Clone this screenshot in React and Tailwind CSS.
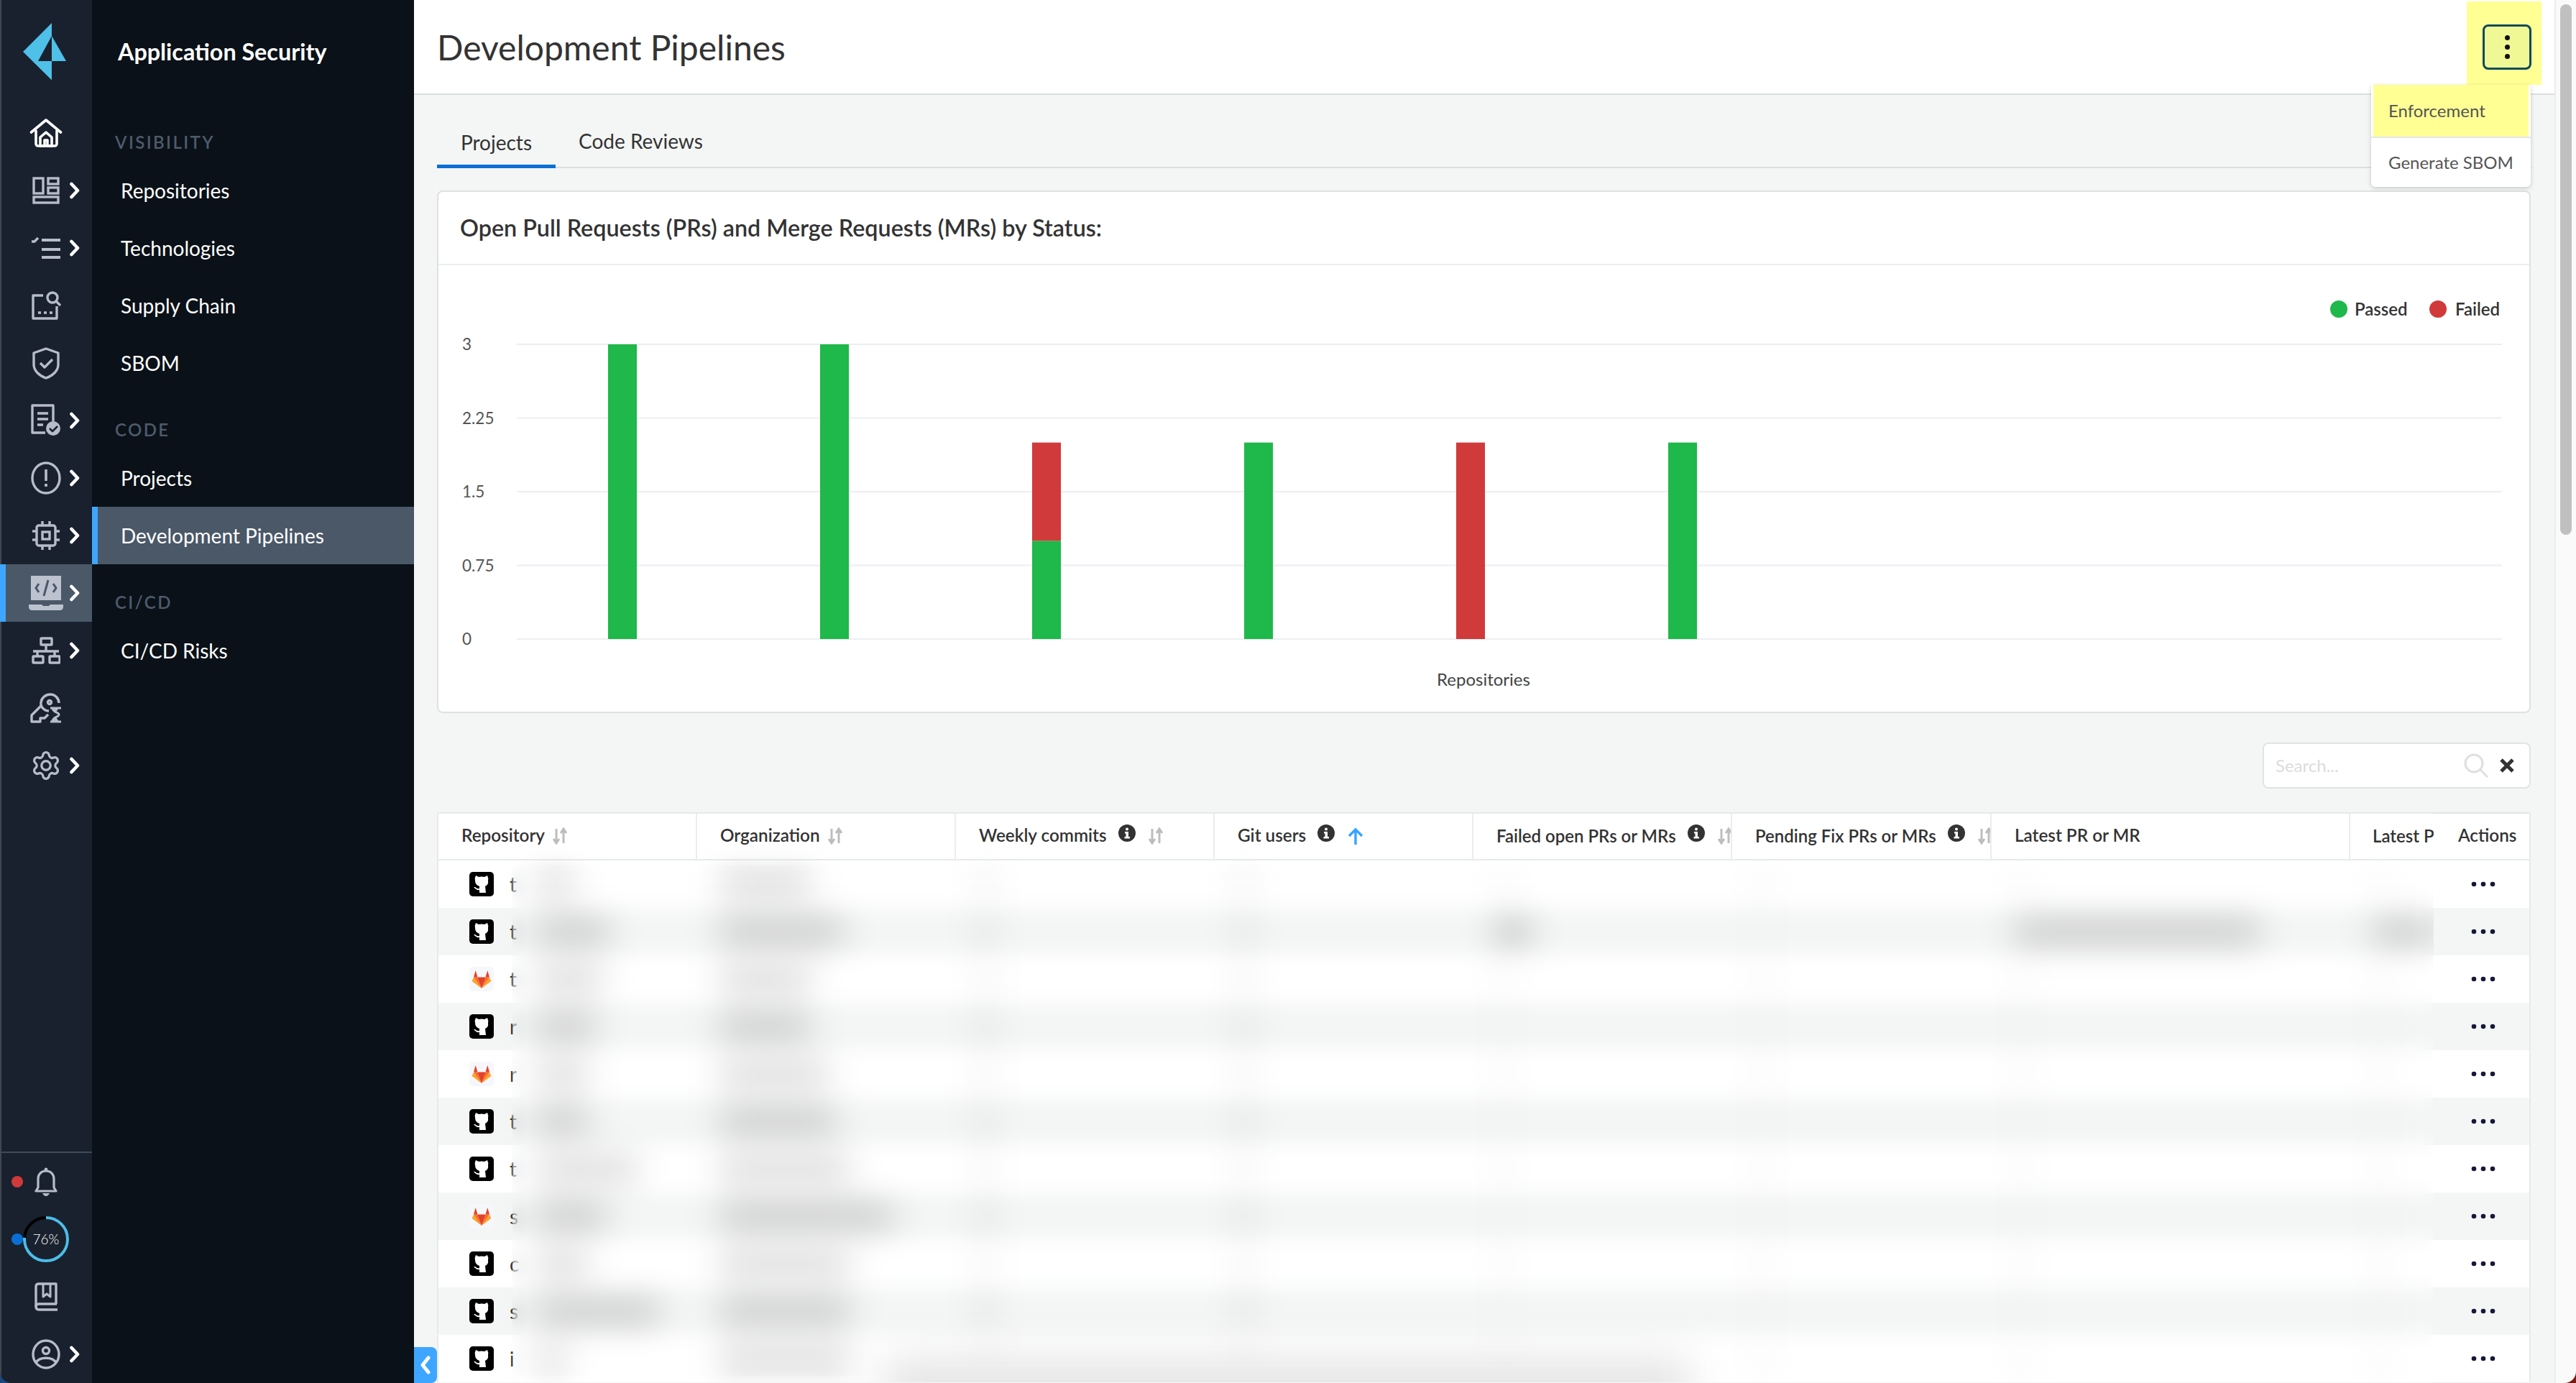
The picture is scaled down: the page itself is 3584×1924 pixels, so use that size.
import React from 'react';

const ICON = '#b6bcc8';

function Chevron() {
  return (
    <svg width="14" height="24" viewBox="0 0 14 24" fill="none" stroke="#fff" strokeWidth="4.6" strokeLinecap="round" strokeLinejoin="round">
      <path d="M2.5 3 L11 12 L2.5 21" />
    </svg>
  );
}

// rail icons, all drawn at their real pixel size
function HomeIcon() {
  return (
    <svg width="46" height="42" viewBox="0 0 46 42" fill="none" stroke="#fff" strokeWidth="3.6" strokeLinejoin="round" strokeLinecap="round">
      <path d="M2.5 20 L23 3 L43.5 20" />
      <path d="M9 18 V36 a3 3 0 0 0 3 3 H35 a3 3 0 0 0 3-3 V18" />
      <path d="M15 27 L23 20 L31 27 V39 H25 V31 H21 V39 H15 Z" />
    </svg>
  );
}
function DashIcon() {
  return (
    <svg width="38" height="38" viewBox="0 0 38 38" fill="none" stroke={ICON} strokeWidth="3.4">
      <rect x="2" y="2" width="13" height="21" />
      <rect x="22" y="2" width="14" height="8" />
      <rect x="22" y="15" width="14" height="8" />
      <rect x="2" y="28" width="34" height="8" />
    </svg>
  );
}
function ListIcon() {
  return (
    <svg width="42" height="32" viewBox="0 0 42 32" fill="none" stroke={ICON} strokeWidth="4">
      <path d="M1 7 L5 7 L10 2" strokeWidth="3.4" />
      <path d="M15 5 H41 M15 18 H41 M15 29 H41" />
    </svg>
  );
}
function SearchDocIcon() {
  return (
    <svg width="42" height="42" viewBox="0 0 42 42" fill="none" stroke={ICON} strokeWidth="3.4" strokeLinejoin="round">
      <path d="M17 7 H3 V39 H36 V22" />
      <circle cx="30" cy="10" r="7" />
      <path d="M35 15 L41 21" />
      <path d="M10 31 h4 M18 31 h4 M26 31 h4" strokeWidth="3.6" />
    </svg>
  );
}
function ShieldIcon() {
  return (
    <svg width="38" height="45" viewBox="0 0 38 45" fill="none" stroke={ICON} strokeWidth="3.4" strokeLinejoin="round">
      <path d="M19 2 L36 8 V24 C36 33 28 40 19 43 C10 40 2 33 2 24 V8 Z" />
      <path d="M11 22 L17 28 L28 17" />
    </svg>
  );
}
function DocCheckIcon() {
  return (
    <svg width="42" height="46" viewBox="0 0 42 46" fill="none" stroke={ICON} strokeWidth="3.4" strokeLinejoin="round">
      <path d="M31 24 V2 H2 V40 H20" />
      <path d="M9 13 H24 M9 21 H24 M9 29 H17" />
      <circle cx="31" cy="34" r="10" fill={ICON} stroke="none" />
      <path d="M26 34 L30 38 L37 31" stroke="#19212e" strokeWidth="2.6" />
    </svg>
  );
}
function AlertIcon() {
  return (
    <svg width="42" height="46" viewBox="0 0 42 46" fill="none" stroke={ICON} strokeWidth="3.4">
      <ellipse cx="21" cy="23" rx="19" ry="21" />
      <path d="M21 11 V27" strokeWidth="3.6" />
      <circle cx="21" cy="33" r="2.2" fill={ICON} stroke="none" />
    </svg>
  );
}
function CpuIcon() {
  return (
    <svg width="38" height="40" viewBox="0 0 38 40" fill="none" stroke={ICON} strokeWidth="3.4">
      <rect x="6" y="6" width="26" height="28" rx="3" />
      <rect x="14" y="15" width="10" height="10" />
      <path d="M14 0 V6 M24 0 V6 M14 34 V40 M24 34 V40 M0 14 H6 M0 26 H6 M32 14 H38 M32 26 H38" />
    </svg>
  );
}
function LaptopCodeIcon() {
  return (
    <svg width="48" height="48" viewBox="0 0 48 48" fill="none">
      <rect x="3" y="0" width="42" height="34" fill="#bcc3cf" />
      <path d="M14 11 L10 17 L14 23 M34 11 L38 17 L34 23 M27 6 L21 28" stroke="#4a5868" strokeWidth="3" />
      <path d="M0 40 H18 L20 42 H28 L30 40 H48 V43 Q48 48 43 48 H5 Q0 48 0 43 Z" fill="#bcc3cf" />
    </svg>
  );
}
function NetworkIcon() {
  return (
    <svg width="40" height="38" viewBox="0 0 40 38" fill="none" stroke={ICON} strokeWidth="3.4" strokeLinejoin="round">
      <rect x="13" y="2" width="15" height="9" rx="1" />
      <rect x="2" y="27" width="14" height="9" rx="1" />
      <rect x="25" y="27" width="14" height="9" rx="1" />
      <path d="M20 11 V20 M2 20 H38 M8 20 V27 M32 20 V27" />
    </svg>
  );
}
function KeyIcon() {
  return (
    <svg width="44" height="42" viewBox="0 0 44 42" fill="none" stroke={ICON} strokeWidth="3.4" strokeLinejoin="round">
      <path d="M26 25 C20 25 14 20 15 13 C16 6 22 2 28 2 C35 2 40 8 40 14" />
      <path d="M15 18 L2 31 V40 H14 V35 H20 L25 30" />
      <circle cx="27" cy="13" r="2.5" />
      <path d="M28 21 H43 M28 40 H43 M31 21 C31 27 40 27 40 30 C40 34 31 33 31 40" strokeWidth="3" />
      <path d="M31 21 H40 L35.5 27 Z M31 40 H40 L35.5 33 Z" fill={ICON} stroke="none" />
    </svg>
  );
}
function GearIcon() {
  return (
    <svg width="44" height="46" viewBox="0 0 24 24" fill="none" stroke={ICON} strokeWidth="1.8" strokeLinejoin="round">
      <path d="M9.671 4.136a2.34 2.34 0 0 1 4.659 0 2.34 2.34 0 0 0 3.319 1.915 2.34 2.34 0 0 1 2.33 4.033 2.34 2.34 0 0 0 0 3.831 2.34 2.34 0 0 1-2.33 4.033 2.34 2.34 0 0 0-3.319 1.915 2.34 2.34 0 0 1-4.659 0 2.34 2.34 0 0 0-3.32-1.915 2.34 2.34 0 0 1-2.33-4.033 2.34 2.34 0 0 0 0-3.831A2.34 2.34 0 0 1 6.35 6.051a2.34 2.34 0 0 0 3.319-1.915" />
      <circle cx="12" cy="12" r="3.4" />
    </svg>
  );
}
function BellIcon() {
  return (
    <svg width="32" height="40" viewBox="0 0 32 40" fill="none" stroke={ICON} strokeWidth="3.2" strokeLinejoin="round">
      <path d="M2 33 H30 L27 28 V16 C27 9 22 5 16 5 C10 5 5 9 5 16 V28 Z" />
      <circle cx="16" cy="3" r="2.4" fill={ICON} stroke="none" />
      <path d="M11 36 H21 Q19 40 16 40 Q13 40 11 36 Z" fill={ICON} stroke="none" />
    </svg>
  );
}
function BookIcon() {
  return (
    <svg width="32" height="40" viewBox="0 0 32 40" fill="none" stroke={ICON} strokeWidth="3.4" strokeLinejoin="round">
      <path d="M31 30 H6 Q2 30 2 34 Q2 38 6 38 H32" />
      <path d="M2 34 V6 Q2 2 6 2 H30 V30" />
      <path d="M12 2 V20 L17 16 L22 20 V2" strokeWidth="3" />
    </svg>
  );
}
function UserIcon() {
  return (
    <svg width="40" height="42" viewBox="0 0 40 42" fill="none" stroke={ICON} strokeWidth="3.4">
      <ellipse cx="20" cy="21" rx="18" ry="19" />
      <circle cx="20" cy="16" r="4.5" />
      <path d="M6 33 C10 24 30 24 34 33" />
    </svg>
  );
}

function Logo() {
  return (
    <svg width="60" height="80" viewBox="32 32 60 80" fill="#4fc0e8">
      <polygon points="72,32 32,72 72,111.5 72,85 53,85 72,50" />
      <polygon points="72,50 92,85 72,85" />
    </svg>
  );
}

const railItems = [
  { Icon: HomeIcon },
  { Icon: DashIcon, more: true },
  { Icon: ListIcon, more: true },
  { Icon: SearchDocIcon },
  { Icon: ShieldIcon },
  { Icon: DocCheckIcon, more: true },
  { Icon: AlertIcon, more: true },
  { Icon: CpuIcon, more: true },
  { Icon: LaptopCodeIcon, more: true, active: true },
  { Icon: NetworkIcon, more: true },
  { Icon: KeyIcon },
  { Icon: GearIcon, more: true },
];

function RailRow({ Icon, more, active, dot, children }) {
  return (
    <div className={`grid h-20 grid-cols-[32px_64px_32px] items-center ${active ? 'bg-[#4a5868]' : ''}`}>
      <div className="flex h-full items-center">
        {active && <span className="block h-full w-2 bg-[#3ea6ff]" />}
        {dot && <span className={`ml-4 block h-4 w-4 rounded-full ${dot}`} />}
      </div>
      <div className="flex items-center justify-center">{Icon ? <Icon /> : children}</div>
      <div className="flex items-center pl-px">{more && <Chevron />}</div>
    </div>
  );
}

function Rail() {
  return (
    <div className="flex h-full w-[128px] shrink-0 flex-col bg-[#19212e] shadow-[inset_2px_0_0_#3f4750]">
      <div className="flex h-[145px] justify-center pt-8 pr-1">
        <Logo />
      </div>
      {railItems.map((item, i) => (
        <RailRow key={i} {...item} />
      ))}
      <div className="mt-auto h-0.5 bg-[#3f4b5a]" />
      <RailRow Icon={BellIcon} dot="bg-[#d03a3a]" />
      <RailRow dot="bg-[#0a6fd4]">
        <div className="relative flex h-16 w-16 items-center justify-center">
          <svg className="absolute inset-0" width="64" height="64" viewBox="0 0 64 64" fill="none" strokeWidth="4">
            <circle cx="32" cy="32" r="30" stroke="#000" />
            <circle cx="32" cy="32" r="30" stroke="#4dbde8" strokeDasharray="143.3 188.5" transform="rotate(-90 32 32)" />
          </svg>
          <span className="text-[19px] font-light text-white">76%</span>
        </div>
      </RailRow>
      <RailRow Icon={BookIcon} />
      <RailRow Icon={UserIcon} more />
    </div>
  );
}

const navGroups = [
  { label: 'VISIBILITY', items: ['Repositories', 'Technologies', 'Supply Chain', 'SBOM'] },
  { label: 'CODE', items: ['Projects', 'Development Pipelines'] },
  { label: 'CI/CD', items: ['CI/CD Risks'] },
];

function SubNav() {
  return (
    <div className="h-full w-[448px] shrink-0 bg-[#0a1118]">
      <div className="flex h-[145px] items-start pl-9 pt-[52px] text-[32.3px] leading-10 font-bold text-white">Application Security</div>
      {navGroups.map((g) => (
        <div key={g.label}>
          <div className="flex h-20 items-end pb-[13px] pl-8 text-[24px] leading-7 font-semibold tracking-[0.1em] text-[#4e5b6c]">{g.label}</div>
          {g.items.map((item) => {
            const active = item === 'Development Pipelines';
            return (
              <div key={item} className={`flex h-20 items-center text-[28px] text-white ${active ? 'border-l-8 border-[#3ea6ff] bg-[#4a5868] pl-8' : 'pl-10'}`}>
                {item}
              </div>
            );
          })}
        </div>
      ))}
    </div>
  );
}

function SortIcon({ active }) {
  if (active) {
    return (
      <svg width="22" height="24" viewBox="0 0 22 24" fill="none" stroke="#36a3ff" strokeWidth="3.4">
        <path d="M11 3 V24 M2 12 L11 3 L20 12" />
      </svg>
    );
  }
  return (
    <svg width="20" height="24" viewBox="0 0 20 24" fill="none" stroke="#bdbdbd" strokeWidth="3">
      <path d="M5 2 V21 M1 16 L5 22 L9 16" />
      <path d="M15 22 V3 M11 8 L15 2 L19 8" />
    </svg>
  );
}

function InfoIcon() {
  return (
    <svg className="-mt-2" width="24" height="24" viewBox="0 0 24 24">
      <circle cx="12" cy="12" r="12" fill="#333" />
      <circle cx="12" cy="6.5" r="2" fill="#fff" />
      <path d="M9 10 H14 V17 H16 V19.5 H8.5 V17 H10.5 V12.5 H9 Z" fill="#fff" />
    </svg>
  );
}

function GithubTile() {
  return (
    <svg width="34" height="34" viewBox="0 0 34 34">
      <rect width="34" height="34" rx="5" fill="#000" />
      <path d="M9 5 L13 7 Q17 6 21 7 L25 5 Q27 9 26 12 Q27 18 22 20 L23 29 H14 V25 Q10 26 6 21 L8 21 Q11 24 14 23 V20 Q8 18 8 12 Q7 9 9 5 Z" fill="#fff" />
    </svg>
  );
}

function GitlabTile() {
  return (
    <svg width="34" height="34" viewBox="0 0 34 34">
      <rect width="34" height="34" rx="5" fill="#f6f7fb" />
      <polygon points="3.7,20 6,14.5 17,30" fill="#fca326" />
      <polygon points="30.3,20 28,14.5 17,30" fill="#fca326" />
      <polygon points="6,14.5 11,14.5 17,30" fill="#fc6d26" />
      <polygon points="28,14.5 23,14.5 17,30" fill="#fc6d26" />
      <polygon points="11,14.5 23,14.5 17,30" fill="#e24329" />
      <polygon points="8.7,5 6,14.5 11.5,14.5" fill="#e24329" />
      <polygon points="25.3,5 28,14.5 22.5,14.5" fill="#e24329" />
    </svg>
  );
}

const columns = [
  { title: 'Repository', w: 'w-[360px] pl-8 text-[24.3px]', sort: true, sortGap: 'ml-[11px]' },
  { title: 'Organization', w: 'w-[360px] pl-8 text-[24.3px]', sort: true, sortGap: 'ml-[11px]' },
  { title: 'Weekly commits', w: 'w-[360px] pl-8 text-[24.3px]', info: true, sort: true, sortGap: 'ml-[18px]' },
  { title: 'Git users', w: 'w-[360px] pl-8 text-[24.3px]', info: true, active: true, sortGap: 'ml-[18px]' },
  { title: 'Failed open PRs or MRs', w: 'w-[360px] pl-8 text-[24px]', info: true, sort: true, sortGap: 'ml-[18px]' },
  { title: 'Pending Fix PRs or MRs', w: 'w-[361px] pl-8 text-[24px]', info: true, sort: true, sortGap: 'ml-[18px]' },
  { title: 'Latest PR or MR', w: 'w-[499px] pl-8 text-[24.3px]' },
  { title: 'Latest PR or MR date', w: 'w-[360px] shrink-0 pl-[31px] text-[24px]' },
];

// values are hidden in the reference, only the widths of the smudges can be read
const rows = [
  { git: 'gh', c: 't', repo: 50, org: 125, m: 'bg-[#e0e0e0]' },
  { git: 'gh', c: 't', repo: 100, org: 170, fail: 46, latest: 340, last: 80, m: 'bg-[#cccccc]' },
  { git: 'gl', c: 't', repo: 90, org: 125, m: 'bg-[#e4e4e4]' },
  { git: 'gh', c: 'r', repo: 80, org: 125, m: 'bg-[#cccccc]' },
  { git: 'gl', c: 'r', repo: 70, org: 150, m: 'bg-[#e4e4e4]' },
  { git: 'gh', c: 't', repo: 70, org: 160, m: 'bg-[#cccccc]' },
  { git: 'gh', c: 't', repo: 140, org: 180, m: 'bg-[#e4e4e4]' },
  { git: 'gl', c: 's', repo: 95, org: 240, m: 'bg-[#cccccc]' },
  { git: 'gh', c: 'c', repo: 70, org: 180, m: 'bg-[#e4e4e4]' },
  { git: 'gh', c: 's', repo: 170, org: 180, m: 'bg-[#cccccc]' },
  { git: 'gh', c: 'i', repo: 40, org: 180, m: 'bg-[#e4e4e4]' },
];

function Smudge({ w, color, className = '' }) {
  return <span className={`block h-[26px] blur-[20px] ${color} ${className}`} style={{ width: w }} />;
}

function Row({ row, index }) {
  const bg = index % 2 === 0 ? 'bg-white' : 'bg-[#f4f6f5]';
  const dark = index % 2 === 0 ? 'bg-[#cccccc]' : 'bg-[#b8b8b8]';
  return (
    <div className={`flex h-[66px] w-max items-center ${bg}`}>
      <div className="flex w-[360px] items-center pl-[43px]">
        {row.git === 'gh' ? <GithubTile /> : <GitlabTile />}
        <span className="ml-[22px] w-[18px] text-[28px] text-[#333]">{row.c}</span>
        <Smudge w={row.repo} color={dark} className="ml-5" />
      </div>
      <div className="w-[360px] pl-8"><Smudge w={row.org} color={dark} /></div>
      <div className="w-[360px] pl-8"><Smudge w={18} color={row.m} /></div>
      <div className="w-[360px] pl-8"><Smudge w={18} color={row.m} /></div>
      <div className="w-[360px] pl-8"><Smudge w={row.fail || 18} color={row.fail ? 'bg-[#aaaaaa]' : 'bg-[#f0f0f0]'} /></div>
      <div className="w-[361px] pl-8"><Smudge w={18} color="bg-[#f0f0f0]" /></div>
      <div className="w-[499px] pl-8"><Smudge w={row.latest || 18} color={row.latest ? 'bg-[#b8b8b8]' : 'bg-[#f0f0f0]'} /></div>
      <div className="w-[360px] pl-8"><Smudge w={row.last || 18} color={row.last ? 'bg-[#b8b8b8]' : 'bg-[#f0f0f0]'} /></div>
    </div>
  );
}

function RepoTable() {
  return (
    <div className="relative mt-[33px] flex w-[2913px] border-x-2 border-t-2 border-[#e8eaea]">
      <div className="relative min-w-0 flex-1 overflow-hidden">
        <div className="flex h-[65px] w-max items-center border-b-2 border-[#e8eaea] bg-white">
          {columns.map((c) => (
            <div key={c.title} className={`flex h-full items-center overflow-hidden whitespace-nowrap border-r-2 border-[#ececec] pb-0.5 font-semibold text-[#333] ${c.w}`}>
              <span className="shrink-0">{c.title}</span>
              {c.info && <span className="ml-4 flex shrink-0"><InfoIcon /></span>}
              {(c.sort || c.active) && (
                <span className={`flex shrink-0 ${c.sortGap}`}>
                  <SortIcon active={c.active} />
                </span>
              )}
            </div>
          ))}
        </div>
        {rows.map((r, i) => (
          <Row key={i} row={r} index={i} />
        ))}
        {/* privacy blur over the table values */}
        <div className="absolute top-[72px] left-[103px] h-[710px] w-[2672px] backdrop-blur-[12px]" />
        <div className="absolute top-[755px] left-[620px] h-[90px] w-[1120px] bg-[#e6e6e6] blur-[28px]" />
      </div>
      <div className="w-[133px] shrink-0 shadow-[-3px_0_5px_rgba(0,0,0,0.07)]">
        <div className="flex h-[65px] items-center border-b-2 border-[#e8eaea] bg-white pb-0.5 pl-[34px] text-[24.3px] font-semibold text-[#333]">Actions</div>
        {rows.map((r, i) => (
          <div key={i} className={`flex h-[66px] items-center pl-[52px] ${i % 2 === 0 ? 'bg-white' : 'bg-[#f4f6f5]'}`}>
            <svg width="34" height="8" viewBox="0 0 34 8" fill="#17173a">
              <circle cx="4" cy="4" r="3.3" />
              <circle cx="17" cy="4" r="3.3" />
              <circle cx="30" cy="4" r="3.3" />
            </svg>
          </div>
        ))}
      </div>
    </div>
  );
}

const yTicks = [
  { label: '3', y: 479 },
  { label: '2.25', y: 581.5 },
  { label: '1.5', y: 684 },
  { label: '0.75', y: 786.5 },
  { label: '0', y: 889 },
];

const bars = [
  { x: 847, pass: 3, fail: 0 },
  { x: 1142, pass: 3, fail: 0 },
  { x: 1437, pass: 1, fail: 1 },
  { x: 1732, pass: 2, fail: 0 },
  { x: 2027, pass: 0, fail: 2 },
  { x: 2322, pass: 2, fail: 0 },
];

function StatusChart() {
  const unit = 410 / 3;
  return (
    <svg className="block font-[Lato]" width="2909" height="622" viewBox="611 369 2909 622">
      {yTicks.map((t) => (
        <g key={t.label}>
          <line x1="720" x2="3482" y1={t.y} y2={t.y} stroke="#eceef1" strokeWidth="2" />
          <text x="644" y={t.y + 8} fontSize="22.5" fill="#555">{t.label}</text>
        </g>
      ))}
      {bars.map((b) => (
        <g key={b.x}>
          <rect x={b.x} y={889 - b.pass * unit} width="40" height={b.pass * unit} fill="#1fb84a" />
          <rect x={b.x} y={889 - (b.pass + b.fail) * unit} width="40" height={b.fail * unit} fill="#d03a3a" />
        </g>
      ))}
      <circle cx="3255" cy="430" r="12" fill="#1fb84a" />
      <text x="3277" y="439" fontSize="24" fontWeight="600" fill="#333">Passed</text>
      <circle cx="3393" cy="430" r="12" fill="#d03a3a" />
      <text x="3417" y="439" fontSize="24" fontWeight="600" fill="#333">Failed</text>
      <text x="2065" y="954" fontSize="24" textAnchor="middle" fill="#444">Repositories</text>
    </svg>
  );
}

export default function App() {
  return (
    <div className="h-[1924px] w-[3584px] overflow-hidden bg-[linear-gradient(to_right,#1b4a80,#7a1a10)] font-[Lato,sans-serif]">
      <div className="flex h-[1924px] w-full overflow-hidden rounded-b-[16px]">
        <Rail />
        <SubNav />
        <div className="relative flex h-full min-w-0 flex-1">
          <div className="w-[2978px] shrink-0 overflow-hidden bg-[#f4f6f5]">
            <header className="flex h-[132px] items-center border-b-2 border-[#dcdfdf] bg-white pt-0.5 pl-8 text-[48px] text-[#333]">
              Development Pipelines
            </header>

            <div className="pl-8">
              <div className="flex h-[102px] w-[2914px] items-end border-b-2 border-[#dcdfdf] text-[28px] text-[#333]">
                <div className="-mb-0.5 flex h-[66px] w-[165px] items-start justify-center border-b-[5px] border-[#0a6fd4] pt-[9px]">Projects</div>
                <div className="flex h-[66px] items-start px-8 pt-[9px]">Code Reviews</div>
              </div>

              <div className="mt-[31px] h-[727px] w-[2913px] overflow-hidden rounded-lg border-2 border-[#dfe1e1] bg-white">
                <div className="flex h-[102px] items-center border-b-2 border-[#eceeee] pl-[30px] text-[32.3px] font-semibold text-[#333]">
                  Open Pull Requests (PRs) and Merge Requests (MRs) by Status:
                </div>
                <StatusChart />
              </div>

              <div className="mt-[41px] flex w-[2913px] justify-end">
                <div className="flex h-16 w-[373px] items-center rounded-lg border-2 border-[#e2e4e4] bg-white pr-4 pl-4">
                  <span className="text-[24px] text-[#dcdcdc]">Search...</span>
                  <svg className="ml-auto" width="34" height="34" viewBox="0 0 34 34" fill="none" stroke="#dfdfdf" strokeWidth="3">
                    <circle cx="14" cy="14" r="12" />
                    <path d="M23 23 L33 33" />
                  </svg>
                  <svg className="mr-[5px] ml-4" width="20" height="20" viewBox="0 0 20 20" fill="none" stroke="#333" strokeWidth="5">
                    <path d="M2 2 L18 18 M18 2 L2 18" />
                  </svg>
                </div>
              </div>

              <RepoTable />
            </div>
          </div>

          <div className="flex-1 border-l-2 border-[#ececec] bg-[#fafafa] pt-1.5 pl-1.5">
            <div className="h-[738px] w-4 rounded-full bg-[#c0c0c0]" />
          </div>

          {/* highlighted kebab and its open menu */}
          <div className="absolute top-0.5 left-[2856px] h-[116px] w-[104px] bg-[#ffff94] pt-8 pl-[22px]">
            <button className="flex h-[63px] w-[68px] flex-col items-center justify-center gap-[6px] rounded-lg border-[3px] border-[#0c4a5a] bg-[#f0f896]">
              <span className="block h-[7px] w-[7px] rounded-full bg-[#111]" />
              <span className="block h-[7px] w-[7px] rounded-full bg-[#111]" />
              <span className="block h-[7px] w-[7px] rounded-full bg-[#111]" />
            </button>
          </div>
          <div className="absolute top-[118px] left-[2723px] w-[222px] rounded-b-md bg-white text-[24px] text-[#555] shadow-[0_2px_6px_rgba(0,0,0,0.18)]">
            <div className="h-[74px] border-b-2 border-[#e4e6e6] px-[3px]">
              <div className="flex h-full items-center bg-[#ffff94] pl-[21px]">Enforcement</div>
            </div>
            <div className="flex h-[68px] items-center pl-6">Generate SBOM</div>
          </div>

          <button className="absolute bottom-0 left-0 flex h-[50px] w-8 items-center justify-center rounded-r-lg bg-[#3ea6ff]">
            <svg width="14" height="26" viewBox="0 0 14 26" fill="none" stroke="#fff" strokeWidth="5" strokeLinecap="round" strokeLinejoin="round">
              <path d="M11 3 L3 13 L11 23" />
            </svg>
          </button>
        </div>
      </div>
    </div>
  );
}
